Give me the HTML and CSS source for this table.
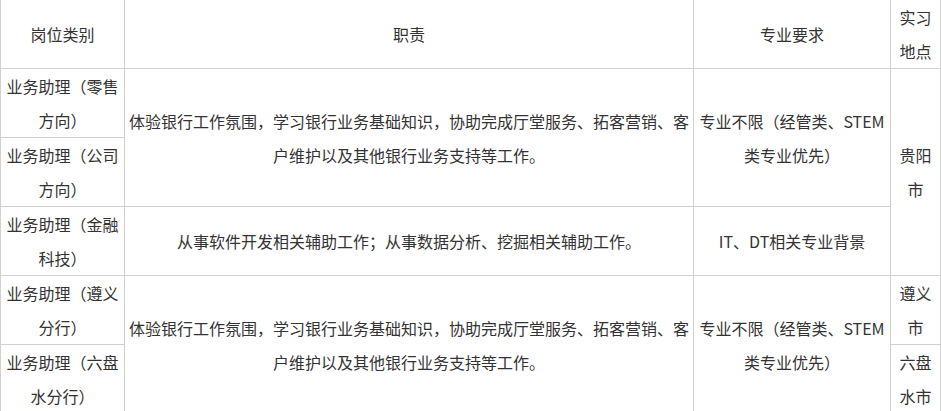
FILE: index.html
```html
<!DOCTYPE html>
<html>
  <head>
    <meta charset="UTF-8" />
    <title>实习岗位</title>
    <link rel="stylesheet" href="styles.css">
  </head>
  <body>
    <table class="job-table">
      <colgroup>
        <col class="col-type" />
        <col class="col-duty" />
        <col class="col-major" />
        <col class="col-place" />
      </colgroup>
      <thead>
        <tr>
          <th>岗位类别</th>
          <th>职责</th>
          <th>专业要求</th>
          <th>实习地点</th>
        </tr>
      </thead>
      <tbody>
        <tr>
          <td>业务助理（零售方向）</td>
          <td rowspan="2">体验银行工作氛围，学习银行业务基础知识，协助完成厅堂服务、拓客营销、客户维护以及其他银行业务支持等工作。</td>
          <td rowspan="2">专业不限（经管类、STEM类专业优先）</td>
          <td rowspan="3">贵阳市</td>
        </tr>
        <tr>
          <td>业务助理（公司方向）</td>
        </tr>
        <tr>
          <td>业务助理（金融科技）</td>
          <td>从事软件开发相关辅助工作；从事数据分析、挖掘相关辅助工作。</td>
          <td>IT、DT相关专业背景</td>
        </tr>
        <tr>
          <td>业务助理（遵义分行）</td>
          <td rowspan="2">体验银行工作氛围，学习银行业务基础知识，协助完成厅堂服务、拓客营销、客户维护以及其他银行业务支持等工作。</td>
          <td rowspan="2">专业不限（经管类、STEM类专业优先）</td>
          <td>遵义市</td>
        </tr>
        <tr>
          <td>业务助理（六盘水分行）</td>
          <td>六盘水市</td>
        </tr>
      </tbody>
    </table>
  </body>
</html>
```

FILE: styles.css
```css
body {
  font-family: "Noto Sans CJK SC", "Noto Sans", sans-serif;
  background-color: #ffffff;
  color: #333333;
  margin: 0;
  padding: 0;
}

.job-table {
  width: 940px;
  margin-top: -1px;
  border-collapse: collapse;
  table-layout: fixed;
}

.col-type {
  width: 124px;
}

.col-duty {
  width: 569px;
}

.col-major {
  width: 197px;
}

.col-place {
  width: 50px;
}

.job-table th,
.job-table td {
  border: 1px solid #d0d0d0;
  padding: 0 4px;
  font-size: 16px;
  font-weight: normal;
  line-height: 34px;
  text-align: center;
  vertical-align: middle;
}
```
